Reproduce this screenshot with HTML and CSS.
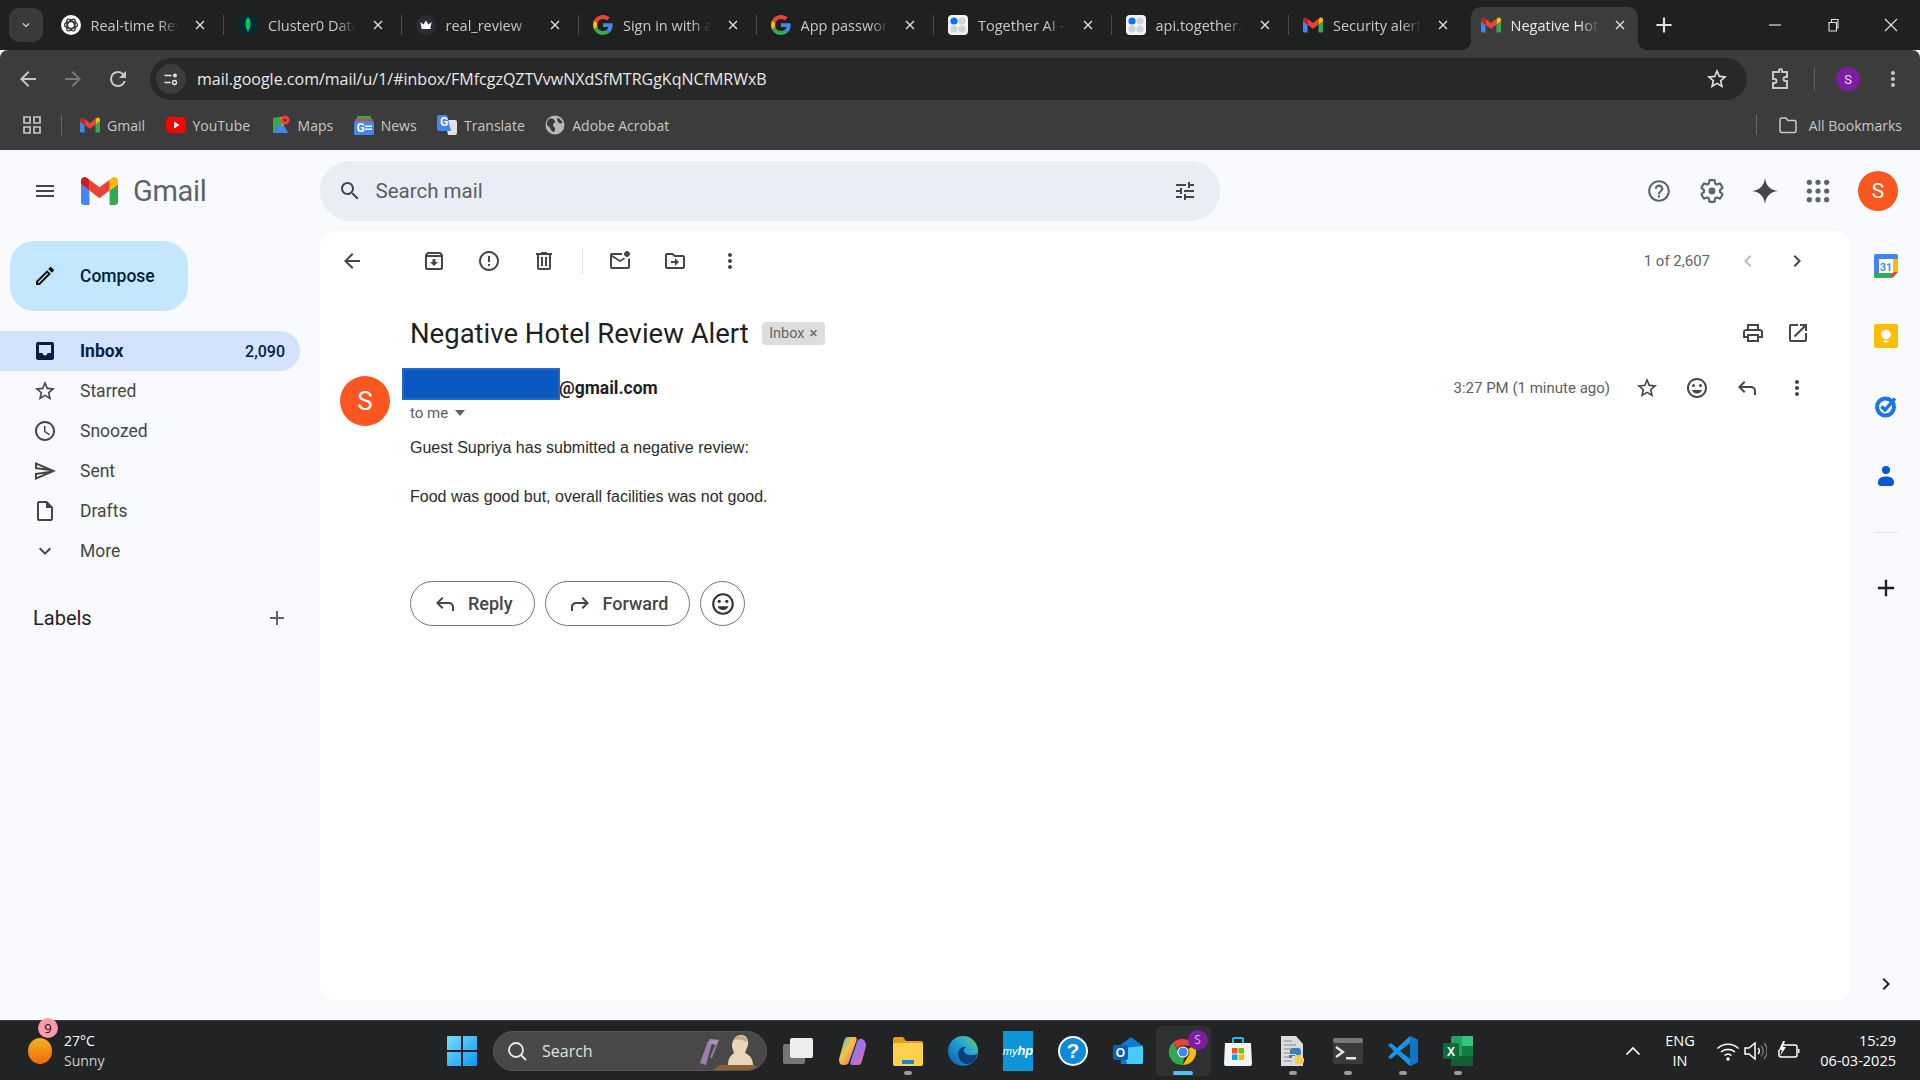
FILE: index.html
```html
<!DOCTYPE html>
<html lang="en">
<head>
<meta charset="utf-8">
<title>Negative Hotel Review Alert - Gmail</title>
<link rel="stylesheet" href="styles.css">
</head>
<body>
<svg class="defs" xmlns="http://www.w3.org/2000/svg">
  <symbol id="i-back" viewBox="0 0 24 24"><path d="M20 11H7.83l5.59-5.59L12 4l-8 8 8 8 1.41-1.41L7.83 13H20v-2z"/></symbol>
  <symbol id="i-forward" viewBox="0 0 24 24"><path d="M4 11h12.17l-5.59-5.59L12 4l8 8-8 8-1.41-1.41L16.17 13H4v-2z"/></symbol>
  <symbol id="i-reload" viewBox="0 0 24 24"><path d="M17.65 6.35A7.96 7.96 0 0 0 12 4a8 8 0 1 0 7.73 10h-2.08A6 6 0 1 1 12 6c1.66 0 3.14.69 4.22 1.78L13 11h7V4l-2.35 2.35z"/></symbol>
  <symbol id="i-archive" viewBox="0 0 24 24"><path d="M20.54 5.23l-1.39-1.68C18.88 3.21 18.47 3 18 3H6c-.47 0-.88.21-1.16.55L3.46 5.23C3.17 5.57 3 6.02 3 6.5V19c0 1.1.9 2 2 2h14c1.1 0 2-.9 2-2V6.5c0-.48-.17-.93-.46-1.27zM6.24 5h11.52l.83 1H5.42l.82-1zM5 19V8h14v11H5zm8.45-9h-2.9v3H8l4 4 4-4h-2.55z"/></symbol>
  <symbol id="i-report" viewBox="0 0 24 24"><path d="M11 15h2v2h-2zm0-8h2v6h-2zm.99-5C6.47 2 2 6.48 2 12s4.47 10 9.99 10C17.52 22 22 17.52 22 12S17.52 2 11.99 2zM12 20c-4.42 0-8-3.58-8-8s3.58-8 8-8 8 3.58 8 8-3.58 8-8 8z"/></symbol>
  <symbol id="i-trash" viewBox="0 0 24 24"><path d="M15 4V3H9v1H4v2h1v13c0 1.1.9 2 2 2h10c1.1 0 2-.9 2-2V6h1V4h-5zm2 15H7V6h10v13zM9 8h2v9H9zm4 0h2v9h-2z"/></symbol>
  <symbol id="i-unread" viewBox="0 0 24 24"><path d="M22 8.98V18c0 1.1-.9 2-2 2H4c-1.1 0-2-.9-2-2V6c0-1.1.9-2 2-2h10.1c-.06.32-.1.66-.1 1s.04.68.1 1H4l8 5 3.67-2.29c.47.43 1.02.76 1.63.98L12 13 4 8v10h16V9.9c.74-.15 1.42-.48 2-.92zM16 5c0 1.66 1.34 3 3 3s3-1.34 3-3-1.34-3-3-3-3 1.34-3 3z"/></symbol>
  <symbol id="i-move" viewBox="0 0 24 24"><path d="M20 6h-8l-2-2H4c-1.1 0-2 .9-2 2v12c0 1.1.9 2 2 2h16c1.1 0 2-.9 2-2V8c0-1.1-.9-2-2-2zm0 12H4V6h5.17l2 2H20v10zm-8-4H8v-2h4V9l4 4-4 4v-3z"/></symbol>
  <symbol id="i-more" viewBox="0 0 24 24"><path d="M12 8c1.1 0 2-.9 2-2s-.9-2-2-2-2 .9-2 2 .9 2 2 2zm0 2c-1.1 0-2 .9-2 2s.9 2 2 2 2-.9 2-2-.9-2-2-2zm0 6c-1.1 0-2 .9-2 2s.9 2 2 2 2-.9 2-2-.9-2-2-2z"/></symbol>
  <symbol id="i-right" viewBox="0 0 24 24"><path d="M10 6L8.59 7.41 13.17 12l-4.58 4.59L10 18l6-6z"/></symbol>
  <symbol id="i-left" viewBox="0 0 24 24"><path d="M15.41 7.41L14 6l-6 6 6 6 1.41-1.41L10.83 12z"/></symbol>
  <symbol id="i-print" viewBox="0 0 24 24"><path d="M19 8h-1V3H6v5H5c-1.66 0-3 1.34-3 3v6h4v4h12v-4h4v-6c0-1.66-1.34-3-3-3zM8 5h8v3H8V5zm8 12v2H8v-4h8v2zm2-2v-2H6v2H4v-4c0-.55.45-1 1-1h14c.55 0 1 .45 1 1v4h-2z"/></symbol>
  <symbol id="i-open" viewBox="0 0 24 24"><path d="M19 19H5V5h7V3H5c-1.11 0-2 .9-2 2v14c0 1.1.89 2 2 2h14c1.1 0 2-.9 2-2v-7h-2v7zM14 3v2h3.59l-9.83 9.83 1.41 1.41L19 6.41V10h2V3h-7z"/></symbol>
  <symbol id="i-star" viewBox="0 0 24 24"><path d="M22 9.24l-7.19-.62L12 2 9.19 8.63 2 9.24l5.46 4.73L5.82 21 12 17.27 18.18 21l-1.63-7.03L22 9.24zM12 15.4l-3.76 2.27 1-4.28-3.32-2.88 4.38-.38L12 6.1l1.71 4.04 4.38.38-3.32 2.88 1 4.28L12 15.4z"/></symbol>
  <symbol id="i-smile" viewBox="0 0 24 24"><path d="M11.99 2C6.47 2 2 6.48 2 12s4.47 10 9.99 10C17.52 22 22 17.52 22 12S17.52 2 11.99 2zM12 20c-4.42 0-8-3.58-8-8s3.58-8 8-8 8 3.58 8 8-3.58 8-8 8z"/><circle cx="15.5" cy="9.5" r="1.5"/><circle cx="8.5" cy="9.5" r="1.5"/><path d="M12 17.5c2.33 0 4.31-1.46 5.11-3.5H6.89c.8 2.04 2.78 3.5 5.11 3.5z"/></symbol>
  <symbol id="i-reply" viewBox="0 0 24 24"><path d="M9 5L3 11l6 6 1.4-1.4L6.8 12H16c1.66 0 3 1.34 3 3v4h2v-4c0-2.76-2.24-5-5-5H6.8l3.6-3.6z"/></symbol>
  <symbol id="i-fwd" viewBox="0 0 24 24"><path d="M15 5l6 6-6 6-1.4-1.4 3.6-3.6H8c-1.66 0-3 1.34-3 3v4H3v-4c0-2.76 2.24-5 5-5h9.2l-3.6-3.6z"/></symbol>
  <symbol id="i-help" viewBox="0 0 24 24"><path d="M11 18h2v-2h-2v2zm1-16C6.48 2 2 6.48 2 12s4.48 10 10 10 10-4.48 10-10S17.52 2 12 2zm0 18c-4.41 0-8-3.59-8-8s3.59-8 8-8 8 3.59 8 8-3.59 8-8 8zm0-14c-2.21 0-4 1.79-4 4h2c0-1.1.9-2 2-2s2 .9 2 2c0 2-3 1.75-3 5h2c0-2.25 3-2.5 3-5 0-2.21-1.79-4-4-4z"/></symbol>
  <symbol id="i-gear" viewBox="0 0 24 24"><path fill="none" stroke="currentColor" stroke-width="2" d="M19.43 12.98c.04-.32.07-.64.07-.98s-.03-.66-.07-.98l2.11-1.65c.19-.15.24-.42.12-.64l-2-3.46c-.12-.22-.39-.3-.61-.22l-2.49 1c-.52-.4-1.08-.73-1.69-.98l-.38-2.65C14.46 2.18 14.25 2 14 2h-4c-.25 0-.46.18-.49.42l-.38 2.65c-.61.25-1.17.59-1.69.98l-2.49-1c-.23-.09-.49 0-.61.22l-2 3.46c-.13.22-.07.49.12.64l2.11 1.65c-.04.32-.07.65-.07.98s.03.66.07.98l-2.11 1.65c-.19.15-.24.42-.12.64l2 3.46c.12.22.39.3.61.22l2.49-1c.52.4 1.08.73 1.69.98l.38 2.65c.03.24.24.42.49.42h4c.25 0 .46-.18.49-.42l.38-2.65c.61-.25 1.17-.59 1.69-.98l2.49 1c.23.09.49 0 .61-.22l2-3.46c.12-.22.07-.49-.12-.64l-2.11-1.65z"/><circle cx="12" cy="12" r="3.2"/></symbol>
  <symbol id="i-spark" viewBox="0 0 24 24"><path d="M12 0c.9 7.2 4.8 11.1 12 12-7.2.9-11.1 4.800-12 12-.9-7.200-4.800-11.100-12-12 7.200-.9 11.100-4.800 12-12z"/></symbol>
  <symbol id="i-apps" viewBox="0 0 24 24"><circle cx="4" cy="4" r="2.400"/><circle cx="12" cy="4" r="2.400"/><circle cx="20" cy="4" r="2.400"/><circle cx="4" cy="12" r="2.400"/><circle cx="12" cy="12" r="2.400"/><circle cx="20" cy="12" r="2.400"/><circle cx="4" cy="20" r="2.400"/><circle cx="12" cy="20" r="2.400"/><circle cx="20" cy="20" r="2.400"/></symbol>
  <symbol id="i-search" viewBox="0 0 24 24"><path d="M15.5 14h-.79l-.28-.27C15.41 12.590 16 11.110 16 9.500 16 5.910 13.090 3 9.500 3S3 5.910 3 9.500 5.910 16 9.500 16c1.610 0 3.090-.59 4.230-1.570l.27.28v.79l5 4.990L20.490 19l-4.990-5zm-6 0C7.010 14 5 11.990 5 9.500S7.010 5 9.500 5 14 7.010 14 9.500 11.990 14 9.500 14z"/></symbol>
  <symbol id="i-tune" viewBox="0 0 24 24"><path d="M3 17v2h6v-2H3zM3 5v2h10V5H3zm10 16v-2h8v-2h-8v-2h-2v6h2zM7 9v2H3v2h4v2h2V9H7zm14 4v-2H11v2h10zm-6-4h2V7h4V5h-4V3h-2v6z"/></symbol>
  <symbol id="i-menu" viewBox="0 0 24 24"><path d="M3 18h18v-2H3v2zm0-5h18v-2H3v2zm0-7v2h18V6H3z"/></symbol>
  <symbol id="i-pen" viewBox="0 0 24 24"><path d="M14.060 9.020l.92.92L5.920 19H5v-.92l9.060-9.060M17.660 3c-.25 0-.51.1-.7.29l-1.830 1.830 3.750 3.750 1.830-1.830c.39-.39.39-1.020 0-1.410l-2.340-2.340c-.2-.2-.45-.29-.71-.29zm-3.600 3.190L3 17.250V21h3.750L17.810 9.940l-3.750-3.750z"/></symbol>
  <symbol id="i-inbox" viewBox="0 0 24 24"><path d="M19 3H5c-1.100 0-2 .9-2 2v14c0 1.100.9 2 2 2h14c1.100 0 2-.9 2-2V5c0-1.100-.9-2-2-2zm-1 11h-3.500c0 1.400-1.100 2.500-2.500 2.500S9.500 15.400 9.500 14H6V6h12v8z"/></symbol>
  <symbol id="i-clock" viewBox="0 0 24 24"><path d="M11.990 2C6.470 2 2 6.480 2 12s4.470 10 9.990 10C17.520 22 22 17.520 22 12S17.520 2 11.990 2zM12 20c-4.420 0-8-3.580-8-8s3.580-8 8-8 8 3.580 8 8-3.580 8-8 8zm.5-13H11v6l5.250 3.150.75-1.230-4.500-2.670z"/></symbol>
  <symbol id="i-send" viewBox="0 0 24 24"><path d="M4.010 6.030l7.510 3.220-7.520-1 .01-2.220m7.500 8.720L4 17.970v-2.220l7.510-1M2.010 3L2 10l15 2-15 2 .01 7L23 12 2.010 3z"/></symbol>
  <symbol id="i-draft" viewBox="0 0 24 24"><path d="M14 2H6c-1.100 0-1.990.9-1.990 2L4 20c0 1.100.89 2 1.990 2H18c1.100 0 2-.9 2-2V8l-6-6zm4 18H6V4h7v5h5v11z"/></symbol>
  <symbol id="i-down" viewBox="0 0 24 24"><path d="M16.590 8.590L12 13.170 7.410 8.590 6 10l6 6 6-6z"/></symbol>
  <symbol id="i-add" viewBox="0 0 24 24"><path d="M19 13h-6v6h-2v-6H5v-2h6V5h2v6h6v2z"/></symbol>
  <symbol id="i-close" viewBox="0 0 12 12"><path d="M2 2l8 8M10 2l-8 8" fill="none" stroke="currentColor" stroke-width="1.400"/></symbol>
  <symbol id="m-gmail" viewBox="52 42 88 66"><path fill="#4285f4" d="M58 108h14V74L52 59v43c0 3.320 2.690 6 6 6"/><path fill="#34a853" d="M120 108h14c3.320 0 6-2.690 6-6V59l-20 15"/><path fill="#fbbc04" d="M120 48v26l20-15v-8c0-7.420-8.470-11.650-14.400-7.200"/><path fill="#ea4335" d="M72 74V48l24 18 24-18v26L96 92"/><path fill="#c5221f" d="M52 51v8l20 15V48l-5.600-4.200c-5.940-4.450-14.400-.22-14.400 7.200"/></symbol>
  <symbol id="m-google" viewBox="0 0 48 48"><path fill="#EA4335" d="M24 9.500c3.540 0 6.710 1.220 9.210 3.600l6.850-6.850C35.900 2.380 30.470 0 24 0 14.620 0 6.510 5.380 2.560 13.220l7.980 6.190C12.430 13.720 17.740 9.500 24 9.500z"/><path fill="#4285F4" d="M46.980 24.550c0-1.570-.15-3.090-.38-4.550H24v9.020h12.940c-.58 2.960-2.260 5.480-4.780 7.180l7.730 6c4.510-4.180 7.090-10.360 7.090-17.650z"/><path fill="#FBBC05" d="M10.530 28.590c-.48-1.450-.76-2.990-.76-4.590s.27-3.140.76-4.590l-7.980-6.190C.92 16.460 0 20.120 0 24c0 3.880.92 7.540 2.560 10.780l7.970-6.190z"/><path fill="#34A853" d="M24 48c6.480 0 11.930-2.130 15.890-5.810l-7.730-6c-2.150 1.450-4.920 2.300-8.160 2.300-6.260 0-11.570-4.220-13.470-9.910l-7.980 6.190C6.510 42.620 14.620 48 24 48z"/></symbol>
  <symbol id="m-together" viewBox="0 0 20 20"><rect width="20" height="20" rx="4" fill="#f2f3f5"/><circle cx="6" cy="6" r="3.600" fill="#0f6fff"/><circle cx="14" cy="6" r="3.600" fill="#cfd3d8"/><circle cx="6" cy="14" r="3.600" fill="#cfd3d8"/><circle cx="14" cy="14" r="3.600" fill="#cfd3d8"/></symbol>
</svg>

<header class="tabstrip">
  <button class="tab-search"><svg class="ic14"><use href="#i-down"/></svg></button>
  <div class="tab sep">
    <svg class="fav" viewBox="0 0 20 20"><circle cx="10" cy="10" r="10" fill="#fff"/><g fill="none" stroke="#333" stroke-width="1.300"><ellipse cx="10" cy="10" rx="6.500" ry="3.400"/><ellipse cx="10" cy="10" rx="6.500" ry="3.400" transform="rotate(60 10 10)"/><ellipse cx="10" cy="10" rx="6.500" ry="3.400" transform="rotate(120 10 10)"/></g></svg>
    <span class="tab-title">Real-time Rev</span><svg class="tab-x"><use href="#i-close"/></svg>
  </div>
  <div class="tab sep">
    <svg class="fav" viewBox="0 0 20 20"><circle cx="10" cy="10" r="10" fill="#022b36"/><path d="M10 2c3 3.500 3.800 8 0 15-3.800-7-3-11.500 0-15z" fill="#00c95c"/></svg>
    <span class="tab-title">Cluster0 Data</span><svg class="tab-x"><use href="#i-close"/></svg>
  </div>
  <div class="tab sep">
    <svg class="fav" viewBox="0 0 20 20"><circle cx="10" cy="10" r="10" fill="#2b2b3a"/><path d="M4.500 7l3 2.500L10 5.500l2.500 4 3-2.500-1.200 7H5.700z" fill="#fff"/></svg>
    <span class="tab-title">real_review</span><svg class="tab-x"><use href="#i-close"/></svg>
  </div>
  <div class="tab sep">
    <svg class="fav"><use href="#m-google"/></svg>
    <span class="tab-title">Sign in with a</span><svg class="tab-x"><use href="#i-close"/></svg>
  </div>
  <div class="tab sep">
    <svg class="fav"><use href="#m-google"/></svg>
    <span class="tab-title">App passwords</span><svg class="tab-x"><use href="#i-close"/></svg>
  </div>
  <div class="tab sep">
    <svg class="fav"><use href="#m-together"/></svg>
    <span class="tab-title">Together AI –</span><svg class="tab-x"><use href="#i-close"/></svg>
  </div>
  <div class="tab sep">
    <svg class="fav"><use href="#m-together"/></svg>
    <span class="tab-title">api.together.a</span><svg class="tab-x"><use href="#i-close"/></svg>
  </div>
  <div class="tab">
    <svg class="fav"><use href="#m-gmail"/></svg>
    <span class="tab-title">Security alert</span><svg class="tab-x"><use href="#i-close"/></svg>
  </div>
  <div class="tab tab-active">
    <svg class="fav"><use href="#m-gmail"/></svg>
    <span class="tab-title">Negative Hot</span><svg class="tab-x"><use href="#i-close"/></svg>
  </div>
  <div class="tab-new"><svg class="ic26"><use href="#i-add"/></svg></div>
  <div class="winctl">
    <span class="win"><svg viewBox="0 0 14 14" class="ic14"><path d="M1 7h12" stroke="currentColor" stroke-width="1.200"/></svg></span>
    <span class="win"><svg viewBox="0 0 14 14" class="ic14"><path d="M3 4.500h7.500v8.500H3zM5.500 4.500V1.500H12v8.500h-1.500" fill="none" stroke="currentColor" stroke-width="1.100"/></svg></span>
    <span class="win"><svg viewBox="0 0 14 14" class="ic14"><path d="M1 1l12 12M13 1L1 13" fill="none" stroke="currentColor" stroke-width="1.200"/></svg></span>
  </div>
</header>

<nav class="toolbar">
  <span class="tb-btn"><svg class="ic24"><use href="#i-back"/></svg></span>
  <span class="tb-btn tb-dim"><svg class="ic24"><use href="#i-forward"/></svg></span>
  <span class="tb-btn"><svg class="ic24"><use href="#i-reload"/></svg></span>
  <div class="urlbar">
    <span class="url-chip"><svg viewBox="0 0 16 16" class="ic16"><path d="M1.500 4.500h7M1.500 11.500h6" stroke="currentColor" stroke-width="1.400"/><circle cx="12" cy="4.500" r="2" fill="currentColor"/><circle cx="11.500" cy="11.500" r="2" fill="none" stroke="currentColor" stroke-width="1.400"/></svg></span>
    <span class="url-text">mail.google.com/mail/u/1/#inbox/FMfcgzQZTVvwNXdSfMTRGgKqNCfMRWxB</span>
    <svg class="ic24 url-star"><use href="#i-star"/></svg>
  </div>
  <svg class="ic24 tb-ext" viewBox="0 0 24 24"><path d="M8 5h3V3.500a1.500 1.500 0 0 1 3 0V5h5v5h-1.500a2 2 0 0 0 0 4H19v7H5v-5h1.500a2 2 0 0 0 0-4H5V5z" fill="none" stroke="currentColor" stroke-width="2"/></svg>
  <span class="tb-sep"></span>
  <span class="profile">S</span>
  <svg class="ic24 tb-more"><use href="#i-more"/></svg>
</nav>

<nav class="bookmarks">
  <svg class="ic20 bm-apps" viewBox="0 0 20 20"><path d="M2 2h6v6H2zM12 2h6v6h-6zM2 12h6v6H2zM12 12h6v6h-6z" fill="none" stroke="currentColor" stroke-width="1.700"/></svg>
  <span class="bm-sep"></span>
  <span class="bm"><svg class="bm-ic"><use href="#m-gmail"/></svg>Gmail</span>
  <span class="bm"><svg class="bm-ic" viewBox="0 0 20 20"><rect y="2" width="20" height="16" rx="4.500" fill="#f00"/><path d="M8 6.500l5.500 3.500L8 13.500z" fill="#fff"/></svg>YouTube</span>
  <span class="bm"><svg class="bm-ic" viewBox="0 0 20 20"><path d="M2 3l7-1 2 5-9 11z" fill="#34a853"/><path d="M2 18l9-11 6 11z" fill="#4285f4"/><path d="M9 2h8v4l-6 5z" fill="#fbbc04"/><circle cx="14" cy="5" r="4.500" fill="#ea4335"/><circle cx="14" cy="5" r="1.600" fill="#8c1c13"/></svg>Maps</span>
  <span class="bm"><svg class="bm-ic" viewBox="0 0 20 20"><path d="M3 1h14v5H3z" fill="#34a853"/><path d="M1 4h18v4H1z" fill="#ea4335"/><rect y="6" width="20" height="14" rx="1.500" fill="#4285f4"/><text x="2.500" y="17" class="bm-g">G</text><path d="M11 10.500h7v1.500h-7zM11 13.500h7v1.500h-7z" fill="#fff"/></svg>News</span>
  <span class="bm"><svg class="bm-ic" viewBox="0 0 20 20"><path d="M8 5h10a2 2 0 0 1 2 2v11a2 2 0 0 1-2 2h-7z" fill="#dfe3e8"/><path d="M2 0h8l4 16H2a2 2 0 0 1-2-2V2a2 2 0 0 1 2-2z" fill="#4285f4"/><text x="3" y="11" class="bm-g">G</text></svg>Translate</span>
  <span class="bm"><svg class="bm-ic" viewBox="0 0 20 20"><circle cx="10" cy="10" r="9.500" fill="#b8b8b8"/><path d="M4 4c3-1 5 0 6 2s-2 2-2 4 3 2 2 5-3 2-4 0-1-3-3-4-1-5 1-7zM13 3c2 .5 4 3 4.500 5-2 1-4 0-5-2s-.5-2.500.5-3z" fill="#3c3c3c"/></svg>Adobe Acrobat</span>
  <span class="bm-all">
    <span class="bm-sep"></span>
    <svg class="ic20" viewBox="0 0 20 20"><path d="M2 4.500A1.500 1.500 0 0 1 3.500 3H8l2 2.500h6.500A1.500 1.500 0 0 1 18 7v9a1.500 1.500 0 0 1-1.500 1.500h-13A1.500 1.500 0 0 1 2 16z" fill="none" stroke="currentColor" stroke-width="1.500"/></svg>
    <span>All Bookmarks</span>
  </span>
</nav>

<div class="gmail">
  <div class="g-header">
    <div class="brand">
      <svg class="ic24 g-menu"><use href="#i-menu"/></svg>
      <svg class="g-logo"><use href="#m-gmail"/></svg>
      <span class="g-word">Gmail</span>
    </div>
    <div class="search">
      <svg class="ic24 s-ic"><use href="#i-search"/></svg>
      <span class="s-text">Search mail</span>
      <svg class="ic24 s-tune"><use href="#i-tune"/></svg>
    </div>
    <div class="g-actions">
      <svg class="ic26"><use href="#i-help"/></svg>
      <svg class="ic26"><use href="#i-gear"/></svg>
      <svg class="ic26 spark"><use href="#i-spark"/></svg>
      <svg class="ic26"><use href="#i-apps"/></svg>
      <span class="account">S</span>
    </div>
  </div>

  <aside class="sidebar">
    <button class="compose"><svg class="ic24 pen"><use href="#i-pen"/></svg>Compose</button>
    <ul class="nav">
      <li class="nav-row active"><svg class="ic24"><use href="#i-inbox"/></svg><span>Inbox</span><b class="count">2,090</b></li>
      <li class="nav-row"><svg class="ic24"><use href="#i-star"/></svg><span>Starred</span></li>
      <li class="nav-row"><svg class="ic24"><use href="#i-clock"/></svg><span>Snoozed</span></li>
      <li class="nav-row"><svg class="ic24"><use href="#i-send"/></svg><span>Sent</span></li>
      <li class="nav-row"><svg class="ic24"><use href="#i-draft"/></svg><span>Drafts</span></li>
      <li class="nav-row"><svg class="ic24"><use href="#i-down"/></svg><span>More</span></li>
    </ul>
    <div class="labels"><span>Labels</span><svg class="ic24"><use href="#i-add"/></svg></div>
  </aside>

  <main class="card">
    <div class="c-toolbar">
      <svg class="ic24 back"><use href="#i-back"/></svg>
      <svg class="ic24 arch"><use href="#i-archive"/></svg>
      <svg class="ic24"><use href="#i-report"/></svg>
      <svg class="ic24"><use href="#i-trash"/></svg>
      <span class="c-sep"></span>
      <svg class="ic24"><use href="#i-unread"/></svg>
      <svg class="ic24"><use href="#i-move"/></svg>
      <svg class="ic24 c-more"><use href="#i-more"/></svg>
      <div class="pager">
        <span class="pager-text">1 of 2,607</span>
        <svg class="ic24 faint"><use href="#i-left"/></svg>
        <svg class="ic24"><use href="#i-right"/></svg>
      </div>
    </div>
    <div class="subject-row">
      <h1 class="subject">Negative Hotel Review Alert</h1>
      <span class="chip">Inbox <i class="chip-x">×</i></span>
      <div class="subject-tools">
        <svg class="ic24"><use href="#i-print"/></svg>
        <svg class="ic24"><use href="#i-open"/></svg>
      </div>
    </div>
    <div class="msg-head">
      <span class="avatar">S</span>
      <div class="who">
        <div class="sender"><span class="redact"></span>@gmail.com</div>
        <div class="tome">to me <i class="caret"></i></div>
      </div>
      <div class="msg-tools">
        <span class="time">3:27 PM (1 minute ago)</span>
        <svg class="ic24 mt-first"><use href="#i-star"/></svg>
        <svg class="ic24"><use href="#i-smile"/></svg>
        <svg class="ic24"><use href="#i-reply"/></svg>
        <svg class="ic24"><use href="#i-more"/></svg>
      </div>
    </div>
    <div class="msg-body">
      <p>Guest Supriya has submitted a negative review:</p>
      <p>Food was good but, overall facilities was not good.</p>
    </div>
    <div class="msg-actions">
      <button class="pill"><svg class="ic24"><use href="#i-reply"/></svg>Reply</button>
      <button class="pill"><svg class="ic24"><use href="#i-fwd"/></svg>Forward</button>
      <button class="pill pill-round"><svg class="ic26 dark"><use href="#i-smile"/></svg></button>
    </div>
  </main>

  <aside class="rail">
    <span class="rail-cell"><svg class="ic24" viewBox="0 0 24 24"><path d="M0 2a2 2 0 0 1 2-2h20a2 2 0 0 1 2 2v16l-6 6H2a2 2 0 0 1-2-2z" fill="#4285f4"/><path d="M18 5h6v13h-6z" fill="#fbbc04"/><path d="M0 19h18v5H2a2 2 0 0 1-2-2z" fill="#34a853"/><path d="M18 18h6l-6 6z" fill="#ea4335"/><rect x="5" y="5" width="14" height="14" fill="#fff"/><text x="12" y="16.500" class="cal">31</text></svg></span>
    <span class="rail-cell"><svg class="ic24" viewBox="0 0 24 24"><rect width="24" height="24" rx="2" fill="#fbbc04"/><circle cx="12" cy="10.500" r="4.800" fill="#fff"/><rect x="9.500" y="16.500" width="5" height="1.800" fill="#fff"/></svg></span>
    <span class="rail-cell"><svg class="ic24" viewBox="0 0 24 24"><circle cx="11.500" cy="13" r="8.500" fill="none" stroke="#1a73e8" stroke-width="4"/><path d="M7.500 12.500l3.500 3.500L21 4.500" fill="none" stroke="#1a73e8" stroke-width="3.400"/></svg></span>
    <span class="rail-cell"><svg class="ic24" viewBox="0 0 24 24"><circle cx="12" cy="6" r="4" fill="#0b57d0"/><path d="M4 18.500c0-4 3-6 8-6s8 2 8 6c0 2-1 3.500-3 3.500H7c-2 0-3-1.500-3-3.500z" fill="#0b57d0"/></svg></span>
    <span class="rail-line"></span>
    <span class="rail-add"><svg class="ic28"><use href="#i-add"/></svg></span>
    <span class="rail-end"><svg class="ic24"><use href="#i-right"/></svg></span>
  </aside>
</div>

<footer class="taskbar">
  <div class="weather">
    <svg class="w-ic" viewBox="0 0 24 26"><defs><linearGradient id="sun" x1="0" y1="0" x2="0" y2="1"><stop offset="0" stop-color="#f2b31c"/><stop offset="1" stop-color="#f06a06"/></linearGradient></defs><ellipse cx="12" cy="13" rx="12" ry="13" fill="url(#sun)"/></svg>
    <span class="w-badge">9</span>
    <div class="w-text"><span>27°C</span><span class="w-sub">Sunny</span></div>
  </div>
  <span class="tk"><svg class="tk-ic" viewBox="0 0 30 30"><defs><linearGradient id="win" x1="0" y1="0" x2="1" y2="1"><stop offset="0" stop-color="#7ddcff"/><stop offset="1" stop-color="#0b97f2"/></linearGradient></defs><path d="M0 1a1 1 0 0 1 1-1h13v14H0zM16 0h13a1 1 0 0 1 1 1v13H16zM0 16h14v14H1a1 1 0 0 1-1-1zM16 16h14v13a1 1 0 0 1-1 1H16z" fill="url(#win)"/></svg></span>
  <div class="tk-search">
    <svg class="ts-ic" viewBox="0 0 20 20"><circle cx="9" cy="9" r="7" fill="none" stroke="#e8e8e8" stroke-width="1.800"/><path d="M14 14l5 5" stroke="#e8e8e8" stroke-width="1.800"/></svg>
    <span class="ts-text">Search</span>
    <svg class="ts-art" viewBox="0 0 62 40"><path d="M2 32L10 10l4 2-6 22zM12 26l8-18 1 1-7 18z" fill="#9b7fa6"/><path d="M12 8l8 1-2 5-8-2z" fill="#a98fb3"/><path d="M14 40l8-6h34l6 6z" fill="#8c5f35"/><path d="M30 34c0-8 4-10 6-12l-2-6c0-8 4-12 9-12s8 4 7 10l-3 8c5 2 8 6 8 12z" fill="#e7d7b8"/><path d="M35 10c2-6 12-7 15 0l-3 1c-3-3-8-3-12-1z" fill="#c3ad85"/></svg>
  </div>
  <span class="tk"><svg class="tk-ic" viewBox="0 0 30 30"><rect x="0" y="8" width="22" height="20" rx="2" fill="#777"/><rect x="7" y="2" width="23" height="20" rx="2" fill="#eee"/></svg></span>
  <span class="tk"><svg class="tk-ic" viewBox="0 0 30 30"><defs><linearGradient id="cp" x1="0" y1="0" x2="1" y2="1"><stop offset="0" stop-color="#2bb7e8"/><stop offset=".45" stop-color="#f6c445"/><stop offset="1" stop-color="#ee4f8b"/></linearGradient><linearGradient id="cp2" x1="0" y1="0" x2="1" y2="1"><stop offset="0" stop-color="#5b8ff0"/><stop offset=".6" stop-color="#b66be0"/><stop offset="1" stop-color="#f08050"/></linearGradient></defs><path d="M10 1h7c2 0 2 3 1 5L11 26c-1 3-4 3-6 3-3 0-4-3-4-6L6 5c.7-2.500 2-4 4-4z" fill="url(#cp)"/><path d="M20 29h-6c-2 0-2-3-1-5l6-18c1-3 3-4 5-3 3 1 4 4 4 7l-4 15c-.7 2.500-2 4-4 4z" fill="url(#cp2)"/></svg></span>
  <span class="tk"><svg class="tk-ic" viewBox="0 0 30 30"><path d="M0 3a2 2 0 0 1 2-2h8l3 4h15a2 2 0 0 1 2 2v4H0z" fill="#e3a012"/><rect y="7" width="30" height="23" rx="2" fill="#fcd14f"/><rect x="9" y="24" width="12" height="4" fill="#1285dc"/></svg><i class="dot"></i></span>
  <span class="tk"><svg class="tk-ic" viewBox="0 0 30 30"><defs><linearGradient id="ed" x1="0" y1="1" x2="1" y2="0"><stop offset="0" stop-color="#0c59a4"/><stop offset=".55" stop-color="#1e9fdb"/><stop offset="1" stop-color="#62d96b"/></linearGradient></defs><circle cx="15" cy="15" r="15" fill="url(#ed)"/><path d="M29 18c-3 1-9 2-12-1-2-2-1-5 1-6-4-1-8 2-8 7 0 5 4 10 10 10 4 0 8-4 9-10z" fill="#0b3d7f"/><path d="M14 12c2-2 5-2 8-1 3 2 4 5 4 7-3 1-8 1-9-2-1-2-1-3-3-4z" fill="#fff" fill-opacity="0"/></svg></span>
  <span class="tk"><span class="hp">my<b>hp</b></span></span>
  <span class="tk"><span class="helpq">?</span></span>
  <span class="tk"><svg class="tk-ic" viewBox="0 0 30 30"><path d="M6 10l12-9 12 9v16a2 2 0 0 1-2 2H8z" fill="#0f78d4"/><path d="M10 12l20-2v16a2 2 0 0 1-2 2H14z" fill="#47cdf5"/><rect y="9" width="15" height="15" rx="2" fill="#0a5fb4"/><text x="7.500" y="21" class="ol">O</text></svg></span>
  <span class="tk tk-active">
    <svg class="tk-ic" viewBox="0 0 30 30"><path d="M15 3a13 13 0 0 1 11.300 6.500H15a6 6 0 0 0-5.400 3.400L5 6.500A13 13 0 0 1 15 3z" fill="#ea4335"/><path d="M26.300 9.500A13 13 0 0 1 15 29l5.200-9a6 6 0 0 0 0-7z" fill="#fbbc04"/><path d="M15 29A13 13 0 0 1 5 6.500l5 8.500a6 6 0 0 0 6 5.500z" fill="#34a853"/><circle cx="15" cy="16" r="5.600" fill="#fff"/><circle cx="15" cy="16" r="4.500" fill="#4285f4"/></svg>
    <span class="tk-badge">S</span>
    <i class="dot dot-blue"></i>
  </span>
  <span class="tk"><svg class="tk-ic" viewBox="0 0 30 30"><path d="M10 7V3a1 1 0 0 1 1-1h8a1 1 0 0 1 1 1v4" fill="none" stroke="#2bb7e8" stroke-width="2"/><path d="M2 7h26l1 21a2 2 0 0 1-2 2H3a2 2 0 0 1-2-2z" fill="#f4f4f4"/><path d="M9 12h5.500v5.500H9z" fill="#f25022"/><path d="M15.500 12H21v5.500h-5.500z" fill="#7fba00"/><path d="M9 18.500h5.500V24H9z" fill="#00a4ef"/><path d="M15.500 18.500H21V24h-5.500z" fill="#ffb900"/></svg></span>
  <span class="tk"><svg class="tk-ic" viewBox="0 0 30 30"><path d="M3 0h15l7 8v22H3z" fill="#dcdcdc"/><path d="M6 5h8M6 9h12M6 13h12M6 17h8M6 21h8M6 25h8" stroke="#8a8a8a" stroke-width="1"/><path d="M19 12h-4a3 3 0 0 0-3 3v3h6v1h-7v3h3v-2h6a3 3 0 0 0 3-3v-2a3 3 0 0 0-4-3z" fill="#3d7fb8"/><path d="M19 28h4a3 3 0 0 0 3-3v-3h-3a3 3 0 0 0-3-3h-3v4a3 3 0 0 0 2 5z" fill="#f7cd45"/></svg><i class="dot"></i></span>
  <span class="tk"><svg class="tk-ic" viewBox="0 0 30 30"><rect y="2" width="30" height="26" rx="2" fill="#3a3a3a"/><rect y="2" width="30" height="5" rx="2" fill="#777"/><path d="M3 11l7 5-7 5" fill="none" stroke="#e8e8e8" stroke-width="2.200"/><path d="M13 21h10v2.500H13z" fill="#e8e8e8"/></svg><i class="dot"></i></span>
  <span class="tk"><svg class="tk-ic" viewBox="0 0 30 30"><path d="M22 0l8 4v22l-8 4L9 18l-6 5-3-2 6-6-6-6 3-2 6 5z" fill="#1e93e5"/><path d="M22 7v16l-10-8z" fill="#2b2b2b"/><path d="M22 0l8 4v22l-8 4z" fill="#0f75c4"/></svg><i class="dot"></i></span>
  <span class="tk"><svg class="tk-ic" viewBox="0 0 30 30"><rect x="8" y="0" width="22" height="30" rx="1.500" fill="#21a366"/><path d="M19 0h11v10H19z" fill="#33c481"/><path d="M19 10h11v10H19z" fill="#107c41"/><path d="M8 20h22v10H8z" fill="#185c37"/><rect y="7" width="16" height="16" rx="1.500" fill="#0f6b3a"/><text x="8" y="20" class="xl">X</text></svg><i class="dot"></i></span>

  <div class="tray">
    <svg class="tr-chev" viewBox="0 0 16 10"><path d="M1.500 8.500L8 2l6.500 6.500" fill="none" stroke="#fff" stroke-width="1.700"/></svg>
    <div class="lang"><span>ENG</span><span>IN</span></div>
    <svg class="tr-ic" viewBox="0 0 24 24"><path d="M1.500 9.500a15 15 0 0 1 21 0M5 13a10.500 10.500 0 0 1 14 0M8.500 16.500a5.500 5.500 0 0 1 7 0" fill="none" stroke="#fff" stroke-width="1.600"/><circle cx="12" cy="20" r="1.800" fill="#fff"/></svg>
    <svg class="tr-ic tr-spk" viewBox="0 0 24 24"><path d="M2 9h4l6-5v16l-6-5H2z" fill="none" stroke="#fff" stroke-width="1.500"/><path d="M15 9a4 4 0 0 1 0 6" fill="none" stroke="#fff" stroke-width="1.500"/><path d="M18 6.500a8 8 0 0 1 0 11M21 4a12 12 0 0 1 0 16" fill="none" stroke="#777" stroke-width="1.300"/></svg>
    <svg class="tr-ic tr-bat" viewBox="0 0 24 24"><path d="M7 6h12a2 2 0 0 1 2 2v8a2 2 0 0 1-2 2H5a2 2 0 0 1-2-2v-5" fill="none" stroke="#fff" stroke-width="1.500"/><path d="M22 10h1.500v4H22z" fill="#fff"/><path d="M7 2L3 11h3l-2 6 6-9H7l2-6z" fill="#fff"/></svg>
    <div class="clock"><span>15:29</span><span>06-03-2025</span></div>
  </div>
</footer>
</body>
</html>
```
FILE: styles.css
```css
* { box-sizing: border-box; }
html, body { margin: 0; height: 100%; }
body {
  width: 1920px; height: 1080px; overflow: hidden;
  display: flex; flex-direction: column;
  font-family: "Roboto", "Liberation Sans", sans-serif;
  background: #f8fafd;
}
.defs { display: none; }
button { font: inherit; border: 0; background: none; padding: 0; color: inherit; }
ul { list-style: none; margin: 0; padding: 0; }
svg { flex: none; display: block; fill: currentColor; }
.ic14 { width: 14px; height: 14px; }
.ic16 { width: 16px; height: 16px; }
.ic20 { width: 20px; height: 20px; }
.ic24 { width: 24px; height: 24px; }
.ic26 { width: 26px; height: 26px; }
.ic28 { width: 28px; height: 28px; }

/* tab strip */
.tabstrip { height: 50px; flex: none; display: flex; align-items: center; background: #1f2121; color: #c7c7c7; padding-left: 9px; font-family: "Open Sans", sans-serif; font-size: 14.5px; }
.tab-search { width: 34px; height: 34px; margin-right: 3.5px; border-radius: 10px; background: #3a3a3a; display: flex; align-items: center; justify-content: center; color: #e6e6e6; }
.tab { width: 177.5px; height: 43px; margin-top: 7px; padding: 0 0 7px 14px; display: flex; align-items: center; position: relative; flex: none; }
.tab.sep::after { content: ""; position: absolute; right: 0; top: 8px; width: 1px; height: 20px; background: #4a4c4c; }
.fav { width: 20px; height: 20px; }
.tab-title { width: 88px; margin-left: 10px; white-space: nowrap; overflow: hidden; -webkit-mask-image: linear-gradient(90deg, #000 78%, transparent); mask-image: linear-gradient(90deg, #000 78%, transparent); }
.tab-x { width: 12px; height: 12px; margin-left: 15.5px; color: #e0e0e0; }
.tab-active { background: #3c3c3c; width: 167px; margin-left: 4.5px; margin-right: 6px; padding-left: 9.5px; border-radius: 10px 10px 0 0; color: #e8e8e8; }
.tab-active::before, .tab-active::after { content: ""; position: absolute; bottom: 0; width: 10px; height: 10px; }
.tab-active::before { left: -10px; background: radial-gradient(circle at 0 0, transparent 10px, #3c3c3c 10.5px); }
.tab-active::after { right: -10px; background: radial-gradient(circle at 100% 0, transparent 10px, #3c3c3c 10.5px); }
.tab-new { width: 40px; display: flex; justify-content: center; color: #e0e0e0; }
.winctl { margin-left: auto; display: flex; color: #e0e0e0; }
.win { width: 58px; height: 40px; display: flex; align-items: center; justify-content: center; }

/* toolbar */
.toolbar { height: 50px; flex: none; display: flex; align-items: center; padding: 8px 0 0 5px; background: #3c3c3c; border-radius: 8px 8px 0 0; color: #c4c7c5; margin-top: 0; }
.tb-btn { width: 45px; display: flex; justify-content: center; }
.tb-dim { color: #777; }
.urlbar { width: 1597px; height: 42px; margin-left: 10px; border-radius: 21px; background: #282828; display: flex; align-items: center; padding-left: 6px; }
.url-chip { width: 30px; height: 30px; border-radius: 50%; background: #3c3c3c; display: flex; align-items: center; justify-content: center; color: #e3e3e3; }
.url-text { margin-left: 11px; color: #e8e8e8; font-family: "Open Sans", sans-serif; font-size: 16px; white-space: nowrap; }
.url-star { margin-left: auto; margin-right: 18px; color: #e3e3e3; }
.tb-ext { margin-left: 21px; }
.tb-sep { width: 1px; height: 24px; background: #5f6060; margin-left: 22px; }
.profile { width: 24px; height: 24px; margin-left: 21px; border-radius: 50%; background: #7b1fa2; color: #e8d6f0; font-size: 13px; display: flex; align-items: center; justify-content: center; flex: none; }
.tb-more { margin-left: 21px; }

/* bookmarks */
.bookmarks { height: 50px; flex: none; display: flex; align-items: center; background: #3c3c3c; padding: 0 18px 0 22px; color: #c7c7c7; font-family: "Open Sans", sans-serif; font-size: 14px; gap: 20.5px; }
.bm-apps { margin-right: -1.500px; }
.bm-sep { width: 1px; height: 20px; background: #666; flex: none; margin-right: -2.500px; }
.bm { display: flex; align-items: center; gap: 7px; white-space: nowrap; }
.bm-ic { width: 20px; height: 20px; }
.bm-g { font: 700 12px "Roboto", sans-serif; fill: #fff; }
.bm-all { margin-left: auto; display: flex; align-items: center; gap: 11px; }
.bm-all .bm-sep { margin-right: 10px; }

/* gmail */
.gmail { flex: 1; min-height: 0; display: grid; grid-template-columns: 320px 1fr 69px; grid-template-rows: 81px 1fr; background: #f8fafd; }
.g-header { grid-column: 1 / -1; display: flex; align-items: center; padding-bottom: 0; }
.brand { width: 320px; display: flex; align-items: center; padding-left: 33px; color: #444746; }
.g-logo { width: 37px; height: 28px; margin-left: 24px; }
.g-word { margin-left: 15px; font-size: 29px; color: #5f6368; letter-spacing: -.3px; }
.search { width: 900px; height: 60px; border-radius: 30px; background: #e9eef6; display: flex; align-items: center; padding: 0 23px 0 18px; color: #444746; }
.s-text { margin-left: 13.5px; font-size: 20.500px; color: #5c5f5e; }
.s-tune { margin-left: auto; }
.g-actions { margin-left: auto; display: flex; align-items: center; gap: 27px; padding-right: 22px; color: #5f6368; }
.spark { color: #444746; }
.account { width: 40px; height: 40px; border-radius: 50%; background: #f95620; color: #fff; font-size: 21px; display: flex; align-items: center; justify-content: center; }

.sidebar { color: #444746; font-size: 17.500px; }
.compose { margin: 10px 0 0 10px; width: 178px; height: 70px; border-radius: 24px; background: #c2e7ff; display: flex; align-items: center; gap: 23px; padding-left: 23px; color: #001d35; font-weight: 500; }
.pen { color: #111; }
.nav { margin-top: 20px; }
.nav-row { width: 300px; height: 40px; display: flex; align-items: center; gap: 23px; padding: 0 15px 0 33px; border-radius: 0 20px 20px 0; }
.nav-row.active { background: #d3e3fd; color: #041e49; font-weight: 700; }
.count { margin-left: auto; font-size: 16px; font-weight: 500; }
.labels { margin-top: 27px; height: 40px; width: 289px; display: flex; align-items: center; justify-content: space-between; padding-left: 33px; font-size: 20px; color: #1f1f1f; }
.labels svg { color: #5f6368; }

.card { margin-bottom: 20px; background: #fff; border-radius: 16px; display: flex; flex-direction: column; color: #444746; min-height: 0; }
.c-toolbar { height: 60px; flex: none; display: flex; align-items: center; gap: 31px; padding: 0 42px 0 20px; }
.arch { margin-left: 27px; }
.c-sep { width: 1px; height: 25px; background: #e3e3e3; margin: 0 -6px 0 -5.500px; }
.pager { margin-left: auto; display: flex; align-items: center; gap: 25px; }
.pager-text { font-size: 15px; color: #5f6368; margin-right: 1px; }
.faint { color: #bdbdbd; }
.subject-row { height: 84px; flex: none; display: flex; align-items: center; padding: 0 41px 0 90px; }
.subject { margin: 0; font-size: 27.500px; font-weight: 400; color: #1f1f1f; white-space: nowrap; }
.chip { margin-left: 13px; width: 63px; height: 23px; background: #dddddd; color: #666; border-radius: 4px; font-size: 14.500px; display: flex; align-items: center; justify-content: center; gap: 5px; }
.chip-x { font-style: normal; font-size: 15px; }
.subject-tools { margin-left: auto; display: flex; gap: 21px; }
.msg-head { display: flex; flex: none; padding: 0 42px 0 20px; height: 51px; }
.avatar { width: 50px; height: 50px; margin-top: 1px; border-radius: 50%; background: #f95620; color: #fff; font-size: 26px; display: flex; align-items: center; justify-content: center; flex: none; }
.who { margin-left: 20px; }
.sender { position: relative; padding-left: 149px; height: 26px; line-height: 26px; font-size: 17.500px; font-weight: 700; color: #1f1f1f; }
.redact { position: absolute; left: -8.500px; top: -7px; width: 158px; height: 32px; background: #0a58c0; box-shadow: inset 0 0 0 2px #2569c4; border-radius: 1px; }
.tome { height: 24px; line-height: 24px; font-size: 15px; color: #5e5e5e; display: flex; align-items: center; gap: 7px; }
.caret { width: 0; height: 0; border: 5.500px solid transparent; border-top: 6px solid #5e5e5e; border-bottom: 0; }
.msg-tools { margin-left: auto; height: 26px; display: flex; align-items: center; gap: 26px; }
.time { font-size: 15px; color: #5e5e5e; margin-right: -1px; }
.msg-body { margin: 9.500px 0 0 90px; font-family: "Liberation Sans", Arial, sans-serif; font-size: 16px; line-height: 24.500px; color: #2b2b2b; }
.msg-body p { margin: 0 0 24.500px; }
.msg-actions { margin: 47.500px 0 0 90px; display: flex; gap: 10px; }
.pill { height: 45px; border: 1px solid #747775; border-radius: 23px; display: flex; align-items: center; gap: 11px; padding: 0 21px 0 22px; font-size: 18px; font-weight: 500; color: #444746; }
.pill-round { width: 45px; padding: 0; justify-content: center; border-radius: 50%; }
.dark { color: #333; }

.rail { display: flex; flex-direction: column; align-items: center; color: #333; padding-right: 0; }
.rail-cell { height: 70px; display: flex; align-items: center; }
.rail-line { width: 24px; height: 1px; background: #dfe1e5; margin-top: 21px; }
.rail-add { margin-top: 41px; color: #1f1f1f; }
.rail-end { margin-top: auto; margin-bottom: 24px; color: #222; }
.cal { font: 700 10.500px "Roboto", sans-serif; fill: #4285f4; text-anchor: middle; }

/* taskbar */
.taskbar { height: 60px; flex: none; display: flex; align-items: center; background: #222324; border-top: 1px solid #3c3c3c; color: #fff; font-family: "Open Sans", sans-serif; }
.weather { width: 434px; display: flex; align-items: center; padding-left: 28px; position: relative; font-size: 14px; }
.w-ic { width: 24px; height: 26px; margin-top: 0; }
.w-badge { position: absolute; left: 38px; top: -13px; width: 20px; height: 20px; border-radius: 50%; background: #ff9aa6; color: #111; font-size: 13px; display: flex; align-items: center; justify-content: center; }
.w-text { margin-left: 12px; display: flex; flex-direction: column; line-height: 20px; }
.w-sub { color: #cfcfcf; }
.tk { width: 55px; height: 50px; display: flex; align-items: center; justify-content: center; position: relative; flex: none; }
.tk-ic { width: 30px; height: 30px; }
.tk-search { width: 274px; height: 40px; margin: 0 3.500px 0 4px; border-radius: 20px; background: #484848; border: 1px solid #555; display: flex; align-items: center; padding-left: 13px; flex: none; overflow: hidden; }
.ts-ic { width: 20px; height: 20px; }
.ts-text { margin-left: 15px; font-size: 16px; color: #e0e0e0; }
.ts-art { width: 62px; height: 40px; margin-left: auto; margin-right: 6px; }
.dot { position: absolute; bottom: 1px; left: 50%; margin-left: -4px; width: 8px; height: 4px; border-radius: 2px; background: #9a9a9a; }
.dot-blue { width: 20px; margin-left: -10px; background: #4fc3f7; }
.tk-active { background: #2f3031; border-radius: 5px; }
.tk-badge { position: absolute; top: 4px; right: 3px; width: 20px; height: 20px; border-radius: 50%; background: #7b1fa2; color: #d8b6e6; font-size: 12px; display: flex; align-items: center; justify-content: center; }
.hp { width: 30px; height: 40px; background: #0d96d6; color: #fff; font: italic 11px "Liberation Sans", sans-serif; display: flex; align-items: center; justify-content: center; }
.hp b { font-weight: 700; font-size: 13px; }
.helpq { width: 30px; height: 30px; border-radius: 50%; background: #0b8bd9; border: 2px solid #fff; color: #fff; font: 700 21px "Liberation Sans", sans-serif; display: flex; align-items: center; justify-content: center; }
.ol, .xl { font: 700 12px "Liberation Sans", sans-serif; fill: #fff; text-anchor: middle; }
.tray { margin-left: auto; display: flex; align-items: center; padding-right: 24px; font-size: 14.500px; text-align: center; }
.tr-chev { width: 16px; height: 10px; }
.lang { margin-left: 19px; width: 40px; display: flex; flex-direction: column; line-height: 20px; }
.tr-ic { width: 24px; height: 24px; }
.lang + .tr-ic { margin-left: 16px; }
.tr-spk { margin-left: 3px; }
.tr-bat { margin-left: 9px; }
.clock { margin-left: 18px; width: 78px; display: flex; flex-direction: column; align-items: flex-end; line-height: 20px; white-space: nowrap; }
```
